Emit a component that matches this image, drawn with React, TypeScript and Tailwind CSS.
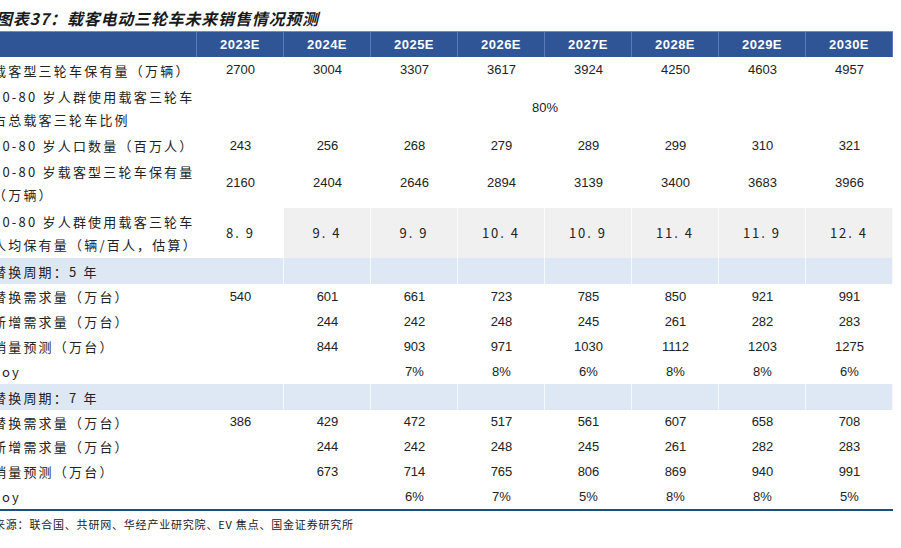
import React from 'react';

const years = ['2023E', '2024E', '2025E', '2026E', '2027E', '2028E', '2029E', '2030E'];

type Row = {
  label: string[];
  values?: string[];
  merged?: string;
  h: string;
  kind?: 'plain' | 'section' | 'gray';
  cjkNums?: boolean;
};

const rows: Row[] = [
  { label: ['载客型三轮车保有量（万辆）'], values: ['2700', '3004', '3307', '3617', '3924', '4250', '4603', '4957'], h: 'h-[26px]' },
  { label: ['60-80 岁人群使用载客三轮车', '占总载客三轮车比例'], merged: '80%', h: 'h-[50px]' },
  { label: ['60-80 岁人口数量（百万人）'], values: ['243', '256', '268', '279', '289', '299', '310', '321'], h: 'h-[25px]' },
  { label: ['60-80 岁载客型三轮车保有量', '（万辆）'], values: ['2160', '2404', '2646', '2894', '3139', '3400', '3683', '3966'], h: 'h-[50px]' },
  { label: ['60-80 岁人群使用载客三轮车', '人均保有量（辆/百人，估算）'], values: ['8.9', '9.4', '9.9', '10.4', '10.9', '11.4', '11.9', '12.4'], h: 'h-[50px]', kind: 'gray', cjkNums: true },
  { label: ['替换周期：5 年'], h: 'h-[26px]', kind: 'section' },
  { label: ['替换需求量（万台）'], values: ['540', '601', '661', '723', '785', '850', '921', '991'], h: 'h-[25px]' },
  { label: ['新增需求量（万台）'], values: ['', '244', '242', '248', '245', '261', '282', '283'], h: 'h-[25px]' },
  { label: ['销量预测（万台）'], values: ['', '844', '903', '971', '1030', '1112', '1203', '1275'], h: 'h-[25px]' },
  { label: ['yoy'], values: ['', '', '7%', '8%', '6%', '8%', '8%', '6%'], h: 'h-[25px]' },
  { label: ['替换周期：7 年'], h: 'h-[26px]', kind: 'section' },
  { label: ['替换需求量（万台）'], values: ['386', '429', '472', '517', '561', '607', '658', '708'], h: 'h-[24px]' },
  { label: ['新增需求量（万台）'], values: ['', '244', '242', '248', '245', '261', '282', '283'], h: 'h-[25px]' },
  { label: ['销量预测（万台）'], values: ['', '673', '714', '765', '806', '869', '940', '991'], h: 'h-[25px]' },
  { label: ['yoy'], values: ['', '', '6%', '7%', '5%', '8%', '8%', '5%'], h: 'h-[25px]' },
];

const cjk = "font-['Noto_Sans_CJK_SC',sans-serif]";

export default function App() {
  return (
    <div className="w-[901px] h-[548px] bg-white overflow-hidden relative">
      <div className={`ml-[-4px] pt-[7px] h-[31px] text-[16px] leading-[22px] font-bold italic tracking-[0.8px] text-[#1a1a1a] ${cjk}`}>
        图表37：载客电动三轮车未来销售情况预测
      </div>

      <div className="ml-[-10px] w-[903px]">
        {/* header */}
        <div className="grid grid-cols-[207px_repeat(8,87px)] h-[26px] bg-[#2f5597] border-t border-[#6f8fc4]">
          <div className="border-r border-[#5b7bb8]" />
          {years.map((y) => (
            <div
              key={y}
              className="flex items-center justify-center border-r border-[#5b7bb8] text-white font-bold text-[13px] tracking-[0.5px] font-['Liberation_Sans',sans-serif]"
            >
              {y}
            </div>
          ))}
        </div>

        {rows.map((r, idx) => {
          const bg = r.kind === 'section' ? 'bg-[#dde8f4]' : '';
          return (
            <div key={idx} className={`grid grid-cols-[207px_repeat(8,87px)] ${r.h} ${bg}`}>
              <div className={`pl-[3px] flex flex-col justify-center text-[13px] leading-[23px] tracking-[2.2px] text-[#222] ${cjk}`}>
                {r.label.map((l) => (
                  <div key={l} className="whitespace-nowrap">{l}</div>
                ))}
              </div>
              {r.merged ? (
                <div className="col-span-8 flex items-center justify-center text-[13px] text-[#222] font-['Liberation_Sans',sans-serif]">
                  {r.merged}
                </div>
              ) : r.values ? (
                r.values.map((v, i) => (
                  <div
                    key={i}
                    className={`flex items-center justify-center text-[13px] text-[#222] ${
                      r.cjkNums ? `${cjk} tracking-[2px]` : "font-['Liberation_Sans',sans-serif]"
                    } ${r.kind === 'gray' && i > 0 ? 'bg-[#f0f0f0] border-r border-white/70' : ''}`}
                  >
                    {r.cjkNums ? v.replace('.', '. ') : v}
                  </div>
                ))
              ) : (
                years.map((y) => <div key={y} className="border-r border-white/70" />)
              )}
            </div>
          );
        })}
        <div className="h-[2px] bg-[#1f4e79]" />
      </div>

      <div className={`ml-[-6px] mt-[5px] text-[11px] leading-[16px] tracking-[0.8px] text-[#222] ${cjk}`}>
        来源：联合国、共研网、华经产业研究院、EV 焦点、国金证券研究所
      </div>
    </div>
  );
}
